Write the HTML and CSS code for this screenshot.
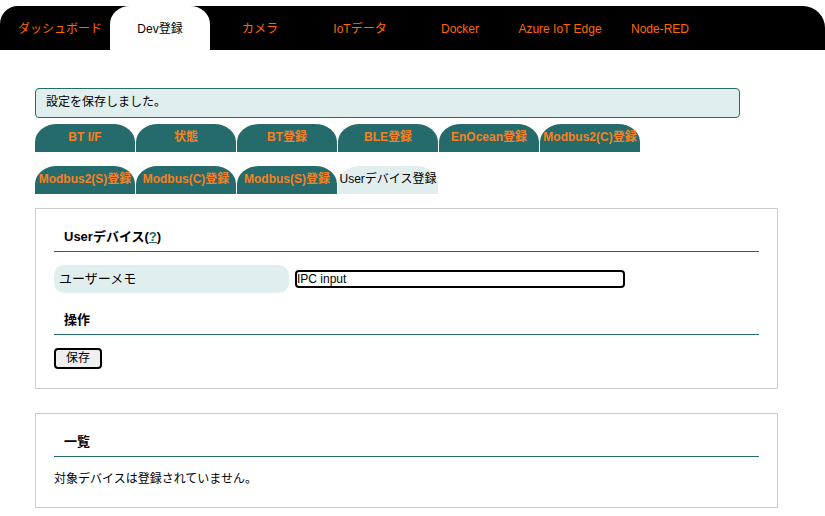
FILE: index.html
```html
<!DOCTYPE html>
<html lang="ja">
<head>
<meta charset="utf-8">
<title>Userデバイス登録</title>
<link rel="stylesheet" href="styles.css">
</head>
<body>
<nav class="topnav">
  <a class="topnav-item">ダッシュボード</a>
  <a class="topnav-item active">Dev登録</a>
  <a class="topnav-item">カメラ</a>
  <a class="topnav-item">IoTデータ</a>
  <a class="topnav-item">Docker</a>
  <a class="topnav-item">Azure IoT Edge</a>
  <a class="topnav-item">Node-RED</a>
</nav>
<main class="content">
  <div class="message">設定を保存しました。</div>
  <div class="subtabs">
    <a class="subtab">BT I/F</a>
    <a class="subtab">状態</a>
    <a class="subtab">BT登録</a>
    <a class="subtab">BLE登録</a>
    <a class="subtab">EnOcean登録</a>
    <a class="subtab">Modbus2(C)登録</a>
  </div>
  <div class="subtabs second">
    <a class="subtab">Modbus2(S)登録</a>
    <a class="subtab">Modbus(C)登録</a>
    <a class="subtab">Modbus(S)登録</a>
    <a class="subtab active">Userデバイス登録</a>
  </div>
  <section class="panel">
    <h3 class="panel-title">Userデバイス(<a class="help">?</a>)</h3>
    <div class="form-row">
      <div class="form-label">ユーザーメモ</div>
      <div class="form-input">IPC input</div>
    </div>
    <h3 class="panel-title gap">操作</h3>
    <button class="btn">保存</button>
  </section>
  <section class="panel second">
    <h3 class="panel-title">一覧</h3>
    <p class="note">対象デバイスは登録されていません。</p>
  </section>
</main>
</body>
</html>
```
FILE: styles.css
```css
* { box-sizing: border-box; }
html, body { margin: 0; padding: 0; background: #fff; }
body {
  font-family: "Liberation Sans", "Noto Sans CJK JP", sans-serif;
  font-size: 12px;
  color: #000;
}
.topnav {
  margin-top: 6px;
  height: 44px;
  background: #000;
  border-radius: 18px 22px 0 0;
  display: flex;
  padding-left: 10px;
}
.topnav-item {
  width: 100px;
  height: 44px;
  line-height: 47px;
  text-align: center;
  color: #ff6a00;
  font-size: 12px;
  white-space: nowrap;
}
.topnav-item.active {
  background: #fff;
  color: #000;
  border-radius: 20px 20px 0 0 / 18px 18px 0 0;
}
.content {
  padding: 38px 0 0 35px;
}
.message {
  width: 705px;
  height: 30px;
  border: 1px solid #266b6b;
  border-radius: 4px;
  background: #e0eeee;
  padding-left: 10px;
  line-height: 27px;
  font-size: 12px;
}
.subtabs {
  display: flex;
  gap: 1px;
  margin-top: 6px;
}
.subtabs.second { margin-top: 14px; }
.subtab {
  width: 100px;
  height: 28px;
  background: #266b6b;
  color: #f7801f;
  font-weight: bold;
  font-size: 12px;
  line-height: 27px;
  text-align: center;
  white-space: nowrap;
  border-radius: 22px 22px 0 0 / 18px 18px 0 0;
}
.subtabs:first-of-type .subtab { line-height: 28px; }
.subtabs.second .subtab { line-height: 27px; }
.subtab.active {
  background: #e0eeee;
  color: #000;
  font-weight: normal;
  font-size: 12px;
}
.panel {
  width: 743px;
  margin-top: 14px;
  border: 1px solid #ccc;
  padding: 18px 18px 19px;
}
.panel.second {
  margin-top: 24px;
  padding-bottom: 18px;
}
.panel-title {
  margin: 0;
  font-size: 13px;
  font-weight: bold;
  line-height: 20px;
  padding: 0 10px 4px;
  border-bottom: 1px solid #266b6b;
}
.panel-title.gap { margin-top: 17px; }
.help { color: #266b6b; text-decoration: underline; }
.form-row {
  display: flex;
  align-items: center;
  gap: 6px;
  margin-top: 13px;
}
.form-label {
  width: 235px;
  height: 28px;
  background: #e0eeee;
  border-radius: 10px;
  padding-left: 5px;
  line-height: 28px;
  font-size: 13px;
}
.form-input {
  width: 330px;
  height: 18px;
  border: 2px solid #000;
  border-radius: 4px;
  padding-left: 0;
  line-height: 14px;
  font-size: 12px;
}
.btn {
  display: block;
  margin-top: 13px;
  width: 48px;
  height: 21px;
  border: 2px solid #000;
  border-radius: 4px;
  background: #efefef;
  font-family: "Liberation Sans", "Noto Sans CJK JP", sans-serif;
  font-size: 12px;
  line-height: 15px;
  padding: 0;
  color: #000;
}
.note {
  margin: 12px 0 0;
  line-height: 20px;
  font-size: 12px;
}
```
